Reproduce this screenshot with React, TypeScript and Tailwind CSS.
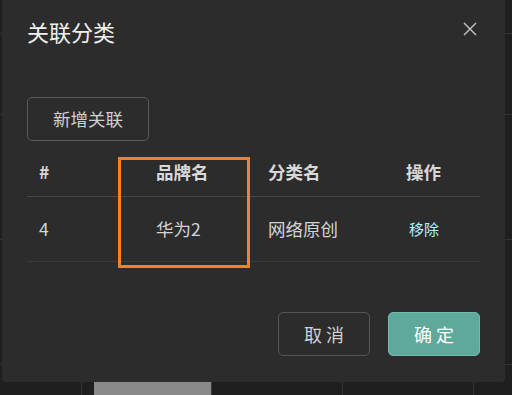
import React from "react";

const font = { fontFamily: '"Noto Sans CJK SC", "Noto Sans", sans-serif' };

export default function App() {
  return (
    <div className="relative w-[512px] h-[395px] overflow-hidden bg-[#1f1f1f]" style={font}>
      {/* background page (behind the dialog) */}
      <div className="flex flex-col w-full h-full">
        <div className="h-[34px] border-b border-[#333338]" />
        <div className="h-[81px] border-b border-[#333338]" />
        <div className="h-[125px] border-b border-[#333338]" />
        <div className="h-[125px] border-b border-[#333338]" />
        <div className="flex-1 flex pt-[16px]">
          <div className="w-[82px] border-r border-[#333338]" />
          <div className="w-[12px]" />
          <div className="w-[118px] bg-[#8a8a8a] border-r border-[#3a3a44]" />
          <div className="w-[131px] border-r border-[#333338]" />
          <div className="w-[131px] border-r border-[#333338]" />
        </div>
      </div>

      {/* dialog */}
      <div className="absolute left-[2px] top-0 w-[503px] h-[382px] bg-[#2c2c2c] rounded-b-[4px] flex flex-col">
        <div className="h-[62px] flex items-center justify-between pl-[25px] pr-[27px]">
          <span className="text-[22px] leading-[30px] text-[#f0f0f0]">关联分类</span>
          <svg width="14" height="14" viewBox="0 0 14 14" className="-mt-[5px] mr-[1px]">
            <path d="M1 1 L13 13 M13 1 L1 13" stroke="#c8c8c8" strokeWidth="1.4" />
          </svg>
        </div>
        <div className="pl-[25px] pt-[35px]">
          <button className="w-[122px] h-[44px] border border-[#5a5a5a] rounded-[5px] text-[17.5px] text-[#d0d0d0]">
            新增关联
          </button>
        </div>
        <div className="ml-[25px] w-[453px] mt-[8px] text-[17.5px]">
          <div className="h-[48px] flex items-center border-b border-[#46464c] font-bold text-[#d8d8d8]">
            <div className="w-[117px] pl-[12px]">#</div>
            <div className="w-[112px] pl-[12px]">品牌名</div>
            <div className="w-[138px] pl-[12px]">分类名</div>
            <div className="flex-1 pl-[12px]">操作</div>
          </div>
          <div className="h-[65px] flex items-center border-b border-[#3a3a3e] text-[#d4d4d4]">
            <div className="w-[117px] pl-[12px]">4</div>
            <div className="w-[112px] pl-[12px]">华为2</div>
            <div className="w-[138px] pl-[12px]">网络原创</div>
            <div className="flex-1 pl-[15px] text-[15px] text-[#b0f2fc]">移除</div>
          </div>
        </div>
        <div className="flex justify-end gap-[18px] pr-[25px] mt-[50px]">
          <button className="w-[92px] h-[44px] border border-[#555558] rounded-[5px] text-[18px] tracking-[4px] pl-[4px] text-[#d0d0d0]">
            取消
          </button>
          <button className="w-[92px] h-[44px] border border-[#72bcae] bg-[#5fa89c] rounded-[5px] text-[18px] tracking-[4px] pl-[4px] text-white">
            确定
          </button>
        </div>
      </div>

      {/* orange highlight annotation */}
      <div className="absolute left-[118px] top-[157px] w-[132px] h-[111px] border-[3px] border-[#ff7f27]" />
    </div>
  );
}
